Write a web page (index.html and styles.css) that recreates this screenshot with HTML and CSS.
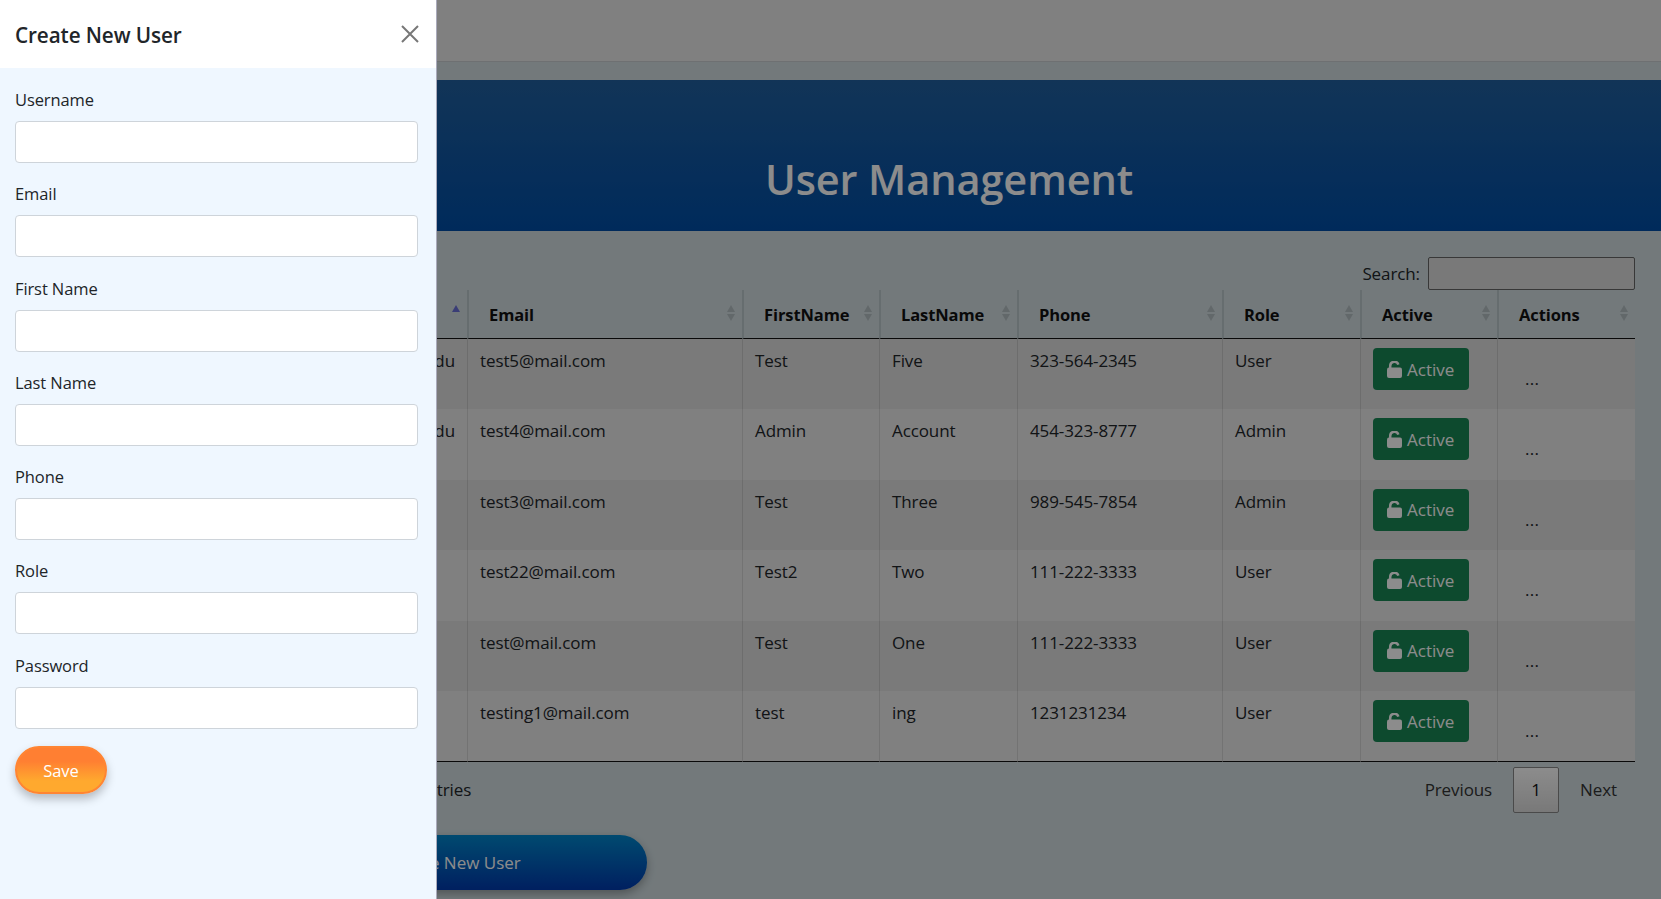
FILE: index.html
```html
<!DOCTYPE html>
<html lang="en">
<head>
<meta charset="utf-8">
<title>User Management</title>
<link rel="stylesheet" href="styles.css">
</head>
<body>
<svg class="defs" aria-hidden="true"><symbol id="unlock" viewBox="0 0 15 17"><path d="M3.2 8V5a4.2 4.2 0 0 1 8.2-1.3" fill="none" stroke="currentColor" stroke-width="2.5"/><rect x="0" y="6.5" width="15" height="10.5" rx="2" fill="currentColor"/></symbol></svg>
<nav class="topbar"></nav>
<header class="band"><h1>User Management</h1></header>
<main class="content">
  <div class="search"><label for="q">Search:</label><input id="q" type="text"></div>
  <table class="users">
    <colgroup><col class="c-user"><col class="c-email"><col class="c-first"><col class="c-last"><col class="c-phone"><col class="c-role"><col class="c-active"><col class="c-actions"></colgroup>
    <thead><tr>
      <th class="sorted">Username</th><th>Email</th><th>FirstName</th><th>LastName</th><th>Phone</th><th>Role</th><th>Active</th><th>Actions</th>
    </tr></thead>
    <tbody>
      <tr><td class="end">test5@school.edu</td><td>test5@mail.com</td><td>Test</td><td>Five</td><td>323-564-2345</td><td>User</td><td><button class="status"><svg class="lock"><use href="#unlock"/></svg>Active</button></td><td><span class="more">...</span></td></tr>
      <tr><td class="end">test4@school.edu</td><td>test4@mail.com</td><td>Admin</td><td>Account</td><td>454-323-8777</td><td>Admin</td><td><button class="status"><svg class="lock"><use href="#unlock"/></svg>Active</button></td><td><span class="more">...</span></td></tr>
      <tr><td class="tuck">test3</td><td>test3@mail.com</td><td>Test</td><td>Three</td><td>989-545-7854</td><td>Admin</td><td><button class="status"><svg class="lock"><use href="#unlock"/></svg>Active</button></td><td><span class="more">...</span></td></tr>
      <tr><td class="tuck">test22</td><td>test22@mail.com</td><td>Test2</td><td>Two</td><td>111-222-3333</td><td>User</td><td><button class="status"><svg class="lock"><use href="#unlock"/></svg>Active</button></td><td><span class="more">...</span></td></tr>
      <tr><td class="tuck">test</td><td>test@mail.com</td><td>Test</td><td>One</td><td>111-222-3333</td><td>User</td><td><button class="status"><svg class="lock"><use href="#unlock"/></svg>Active</button></td><td><span class="more">...</span></td></tr>
      <tr><td class="tuck">testing1</td><td>testing1@mail.com</td><td>test</td><td>ing</td><td>1231231234</td><td>User</td><td><button class="status"><svg class="lock"><use href="#unlock"/></svg>Active</button></td><td><span class="more">...</span></td></tr>
    </tbody>
  </table>
  <div class="tablefoot">
    <div class="info">Showing 1 to 6 of 6 entries</div>
    <div class="pager"><a>Previous</a><a class="current">1</a><a>Next</a></div>
  </div>
  <button class="create">Create New User</button>
</main>
<div class="backdrop"></div>
<aside class="panel">
  <div class="panel-head">
    <h5>Create New User</h5>
    <button class="close" aria-label="Close"><svg viewBox="0 0 18 18" width="18" height="18"><path d="M1 1l16 16M17 1L1 17" stroke="currentColor" stroke-width="2" fill="none"/></svg></button>
  </div>
  <form class="panel-body">
    <div class="field"><label>Username</label><input type="text"></div>
    <div class="field"><label>Email</label><input type="text"></div>
    <div class="field"><label>First Name</label><input type="text"></div>
    <div class="field"><label>Last Name</label><input type="text"></div>
    <div class="field"><label>Phone</label><input type="text"></div>
    <div class="field"><label>Role</label><input type="text"></div>
    <div class="field"><label>Password</label><input type="password"></div>
    <button type="button" class="save">Save</button>
  </form>
</aside>
</body>
</html>
```
FILE: styles.css
```css
* { box-sizing: border-box; }
html, body { height: 100%; }
body { margin: 0; overflow: hidden; background: #d1dde1; color: #212529; font: 17px/27px "Open Sans", "Noto Sans", sans-serif; letter-spacing: -.1px; }
.defs { display: none; }
.topbar { height: 62px; background: #e9e9e9; border-bottom: 1px solid #c9cdd0; }
.band { margin-top: 18px; height: 151px; padding: 70px 0 0 237px; background: linear-gradient(#21609f, #004ea7); text-align: center; }
.band h1 { margin: 0; color: #fff; font-size: 41.5px; line-height: 58px; font-weight: 600; letter-spacing: -.1px; }
.content { padding: 26px 26px 0; }
.search { display: flex; justify-content: flex-end; align-items: center; gap: 8px; height: 33px; }
.search input { width: 207px; height: 33px; background: #dcdcdc; border: 1px solid #666; border-radius: 2px; }
.users { width: 1609px; table-layout: fixed; border-collapse: separate; border-spacing: 0; }
.c-user { width: 441px; } .c-email { width: 275px; } .c-first { width: 137px; } .c-last { width: 138px; }
.c-phone { width: 205px; } .c-role { width: 138px; } .c-active { width: 137px; } .c-actions { width: 138px; }
.users th { position: relative; height: 49px; padding: 0 22px 0 20px; text-align: left; font-size: 16.5px; font-weight: 700; color: #111; border-left: 2px solid rgba(0,0,0,.1); border-bottom: 1px solid #111; white-space: nowrap; }
.users th::before, .users th::after { content: ""; position: absolute; right: 7px; width: 0; height: 0; border-left: 4.5px solid transparent; border-right: 4.5px solid transparent; }
.users th::before { top: 15px; border-bottom: 7px solid rgba(0,0,0,.14); }
.users th::after { top: 24px; border-top: 7px solid rgba(0,0,0,.14); }
.users th.sorted::before { border-bottom-color: #6a70d8; }
.users th.sorted::after { display: none; }
.users td { height: 70.45px; padding: 8px 12px; vertical-align: top; background: #e9e9e9; border-left: 1px solid rgba(0,0,0,.1); white-space: nowrap; overflow: hidden; }
.users tbody tr:nth-child(odd) td { background: #dedede; }
.users tbody tr:last-child td { border-bottom: 1px solid #111; }
.users td.end, .users td.tuck { text-align: right; }
.users td.tuck { padding-right: 40px; }
.status { display: flex; align-items: center; gap: 5px; width: 96px; height: 42px; margin-top: 1px; padding: 0 0 0 14px; background: #198754; color: #fff; border: 0; border-radius: 4px; font: inherit; }
.lock { width: 15px; height: 17px; flex: none; }
.more { display: block; margin-top: 18px; padding-left: 15px; letter-spacing: .3px; }
.tablefoot { display: flex; justify-content: space-between; align-items: flex-start; padding-top: 5px; }
.info { margin-top: 9px; padding-left: 238px; }
.pager { display: flex; align-items: center; gap: 21px; height: 46px; padding-right: 18px; color: #333; }
.pager .current { width: 46px; height: 46px; line-height: 44px; text-align: center; color: #111; background: linear-gradient(#fff, #dcdcdc); border: 1px solid #888; border-radius: 2px; }
.create { display: block; width: 420px; height: 55px; margin: 22px 0 0 201px; padding-left: 40px; background: linear-gradient(#0087cc, #003aaf); color: #fff; border: 0; border-radius: 27px; font: inherit; box-shadow: 0 4px 10px rgba(0,0,0,.3); }
.backdrop { position: fixed; inset: 0; background: rgba(0,0,0,.45); }
.panel { position: fixed; top: 0; left: 0; bottom: 0; width: 437px; background: #eff7ff; border-right: 1px solid #aab; font-size: 16.5px; }
.panel-head { display: flex; justify-content: space-between; align-items: center; height: 68px; padding: 2px 17px 0 15px; background: #fff; }
.panel-head h5 { margin: 0; font-size: 20.7px; line-height: 30px; font-weight: 600; color: #212529; letter-spacing: -.1px; }
.close { display: flex; margin-bottom: 3px; padding: 0; background: none; border: 0; color: #777; }
.panel-body { padding: 18px 18px 0 15px; }
.field { height: 94.3px; }
.field label { display: block; height: 27px; margin-bottom: 8px; }
.field input { display: block; width: 100%; height: 42px; background: #fff; border: 1px solid #ced4da; border-radius: 4px; }
.save { display: block; width: 92px; height: 48px; background: linear-gradient(#ff7f32 30%, #ffa92e 75%); color: #fff; border: 2px solid #ff8533; border-radius: 24px; font: inherit; box-shadow: 0 5px 10px rgba(0,0,0,.25); }
```
